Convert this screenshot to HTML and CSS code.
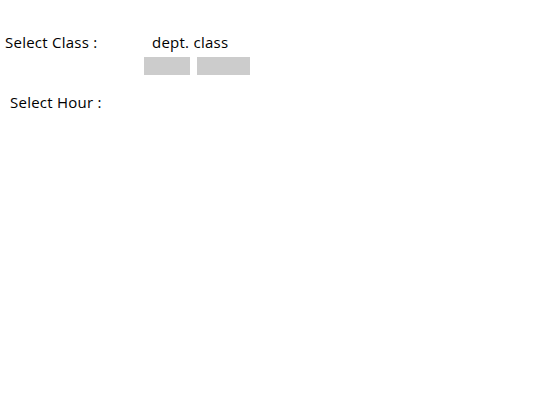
FILE: index.html
```
<!DOCTYPE html>
<html>
<head>
<meta charset="utf-8">
<link rel="stylesheet" href="styles.css">
</head>
<body>
<div class="row class-row">
  <div class="label">Select Class :</div>
  <div class="picker">
    <div class="picker-title">dept. class</div>
    <div class="boxes">
      <div class="box box-dept"></div>
      <div class="box box-class"></div>
    </div>
  </div>
</div>
<div class="row hour-row">
  <div class="label">Select Hour :</div>
</div>
</body>
</html>
```
FILE: styles.css
```
html, body {
  margin: 0;
  padding: 0;
  background: #fff;
}
body {
  font-family: "Open Sans", "Noto Sans", sans-serif;
  font-size: 15px;
  letter-spacing: 0.25px;
  color: #000;
  padding-top: 32px;
}
.row {
  display: flex;
}
.class-row {
  padding-left: 5px;
}
.class-row .label {
  width: 139px;
  line-height: 21px;
}
.picker-title {
  padding-left: 8px;
  line-height: 21px;
}
.boxes {
  display: flex;
  gap: 7px;
  margin-top: 4px;
}
.box {
  height: 18px;
  background: #cccccc;
}
.box-dept { width: 46px; }
.box-class { width: 53px; }
.hour-row {
  padding-left: 10px;
  margin-top: 17px;
}
.hour-row .label {
  line-height: 21px;
}
```
